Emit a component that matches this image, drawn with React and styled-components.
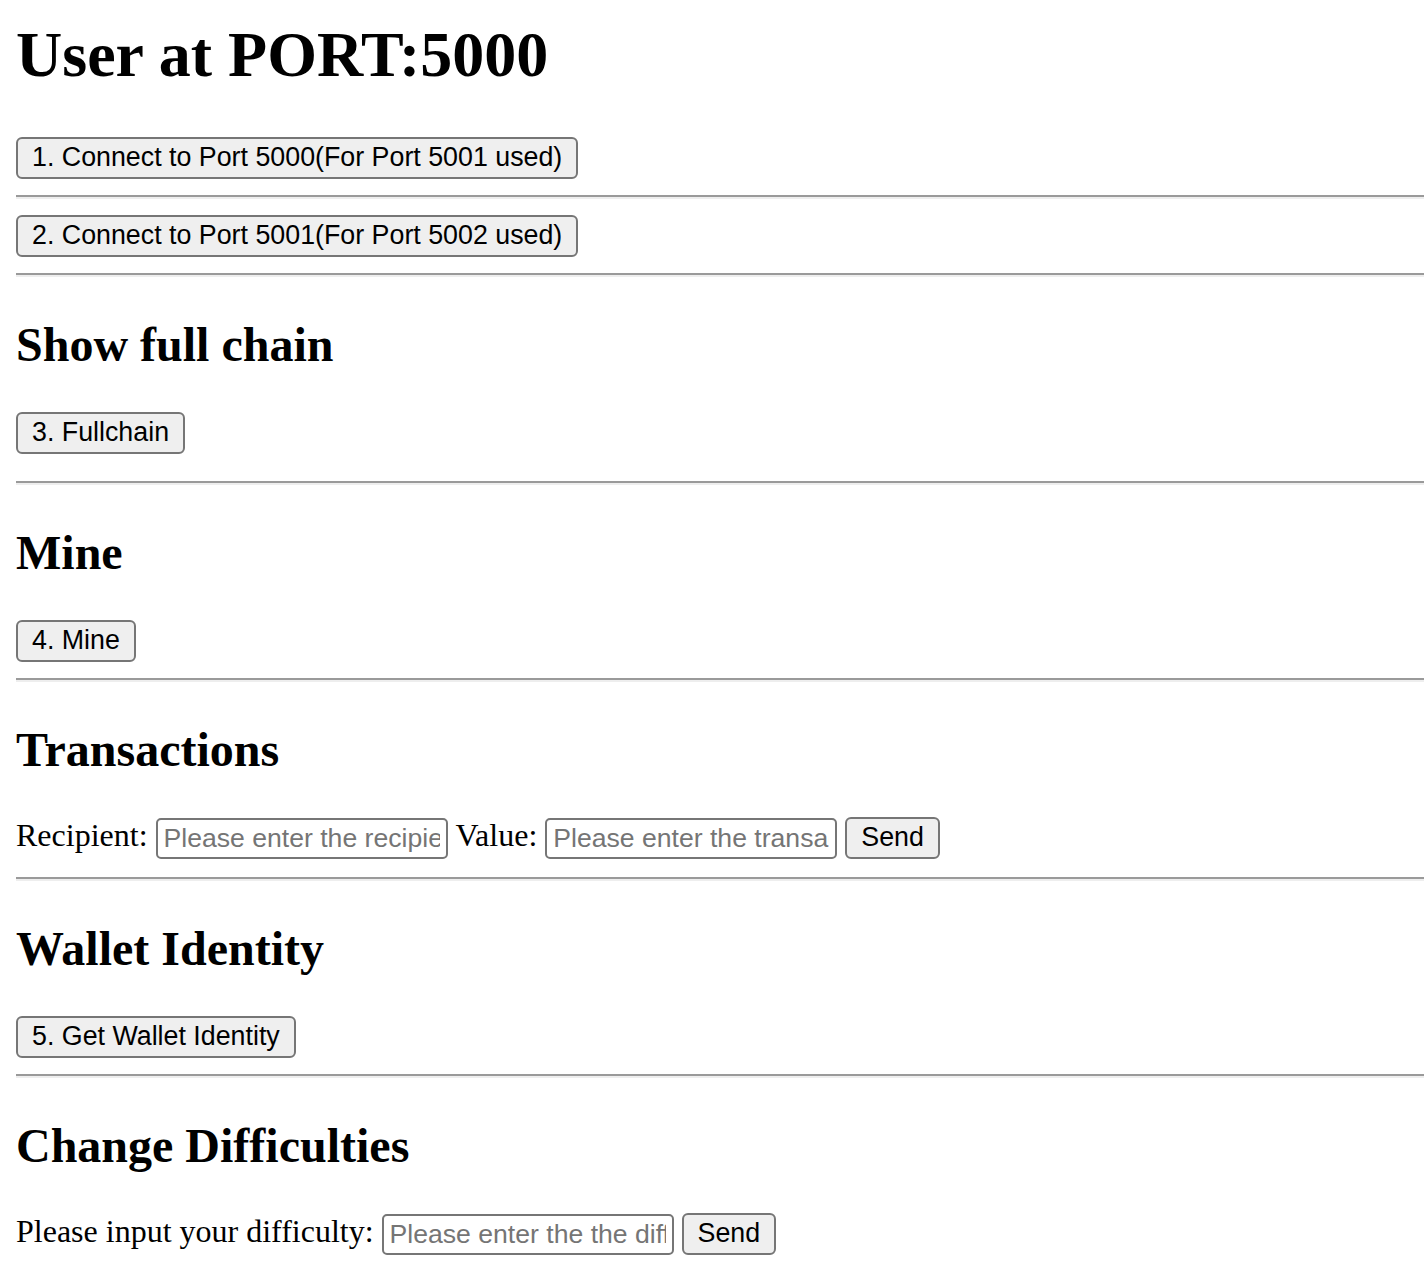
import React from 'react'
import styled, { createGlobalStyle } from 'styled-components'

const GlobalStyle = createGlobalStyle`
  html, body {
    margin: 0;
    padding: 0;
    background: #fff;
  }
  body {
    font-family: "Liberation Serif", "Times New Roman", serif;
    color: #000;
  }
`

const Page = styled.div`
  padding: 16px 0 16px 16px;
`

const Title = styled.h1`
  margin: 2px 0 45px;
  font-size: 64px;
  line-height: 74px;
  font-weight: bold;
`

const Heading = styled.h2`
  margin: 40px 0;
  font-size: 48px;
  line-height: 55px;
  font-weight: bold;
`

const Row = styled.div`
  display: flex;
  align-items: flex-start;
  gap: 8px;
  min-height: ${props => props.tall ? '44px' : '42px'};
  padding-bottom: ${props => props.extra || 0}px;
`

const Label = styled.span`
  font-size: 32px;
  line-height: 37px;
  white-space: nowrap;
`

const Button = styled.button`
  box-sizing: border-box;
  height: 42px;
  margin: 0;
  padding: 0 14px 1px;
  font-family: "Liberation Sans", Arial, sans-serif;
  font-size: 26.8px;
  color: #000;
  background: #efefef;
  border: 2px solid #767676;
  border-radius: 6px;
  white-space: nowrap;
`

const Input = styled.input`
  box-sizing: border-box;
  width: 292px;
  height: 41px;
  margin: 1px 0 0;
  padding: 2px 6px;
  font-family: "Liberation Sans", Arial, sans-serif;
  font-size: 26.6px;
  color: #000;
  background: #fff;
  border: 2px solid #767676;
  border-radius: 5px;
  outline: none;

  &::placeholder {
    color: #757575;
  }
`

const Rule = styled.hr`
  margin: 16px 0;
  height: 0;
  border: none;
  border-top: 2px solid #9a9a9a;
  border-bottom: 2px solid #eeeeee;
`

function ButtonSection({ title, label, extra }) {
  return (
    <>
      {title && <Heading>{title}</Heading>}
      <Row extra={extra}>
        <Button>{label}</Button>
      </Row>
      <Rule />
    </>
  )
}

export default function App() {
  return (
    <Page>
      <GlobalStyle />
      <Title>User at PORT:5000</Title>

      <ButtonSection label="1. Connect to Port 5000(For Port 5001 used)" />
      <ButtonSection label="2. Connect to Port 5001(For Port 5002 used)" />
      <ButtonSection title="Show full chain" label="3. Fullchain" extra={11} />
      <ButtonSection title="Mine" label="4. Mine" />

      <Heading>Transactions</Heading>
      <Row tall>
        <Label>Recipient:</Label>
        <Input placeholder="Please enter the recipient" />
        <Label>Value:</Label>
        <Input placeholder="Please enter the transaction value" />
        <Button>Send</Button>
      </Row>
      <Rule />

      <ButtonSection title="Wallet Identity" label="5. Get Wallet Identity" />

      <Heading>Change Difficulties</Heading>
      <Row tall>
        <Label>Please input your difficulty:</Label>
        <Input placeholder="Please enter the the difficulty" />
        <Button>Send</Button>
      </Row>
    </Page>
  )
}
